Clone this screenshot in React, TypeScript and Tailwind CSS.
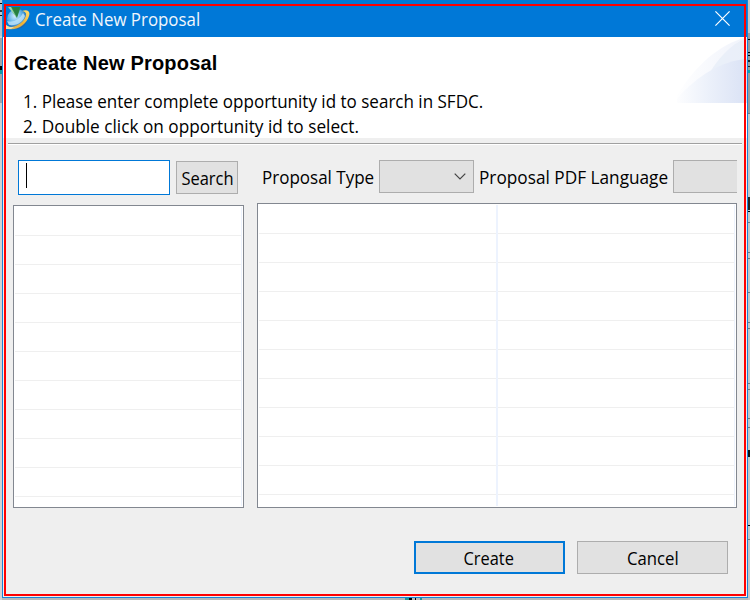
import type { ReactNode } from "react";

const leftRows = Array.from({ length: 10 }, (_, i) => i);

function EdgeStrip({ side }: { side: "left" | "right" }) {
  return side === "left" ? (
    <svg className="h-[600px] w-[2px] shrink-0" viewBox="0 0 2 600" shapeRendering="crispEdges">
      <rect width="2" height="600" fill="#d2d2d2" />
      <rect y="0" width="2" height="36" fill="#bcc3ca" />
      <rect y="3" width="2" height="1" fill="#000" />
      <rect y="10" width="2" height="2" fill="#333" />
      <rect y="15" width="2" height="1" fill="#111" />
      <rect y="38" width="2" height="65" fill="#a3a5a8" />
      <rect y="66" width="2" height="4" fill="#000" />
      <rect y="70" width="2" height="4" fill="#169c9c" />
    </svg>
  ) : (
    <svg className="h-[600px] w-[2px] shrink-0" viewBox="0 0 2 600" shapeRendering="crispEdges">
      <rect width="2" height="600" fill="#c6c6c6" />
      <rect y="33" width="2" height="80" fill="#9b9b9b" />
      <rect y="39" width="2" height="1" fill="#000" />
      <rect y="52" width="2" height="1" fill="#000" />
      <rect y="55" width="2" height="1" fill="#000" />
      <rect y="60" width="2" height="2" fill="#222" />
      <rect y="66" width="2" height="1" fill="#222" />
      <rect y="70" width="2" height="3" fill="#12a5a5" />
      <rect y="113" width="2" height="1" fill="#777" />
      <rect y="197" width="2" height="13" fill="#26221f" />
      <rect y="211" width="2" height="1" fill="#000" />
      {[222, 252, 258, 292, 322, 328, 383, 389, 418, 427, 539].map((y) => (
        <rect key={y} y={y} width="2" height="1" fill="#777" />
      ))}
      <rect y="450" width="2" height="7" fill="#111" />
      <rect y="525" width="2" height="1" fill="#000" />
    </svg>
  );
}

function AppIcon() {
  return (
    <svg className="h-[26px] w-[25px] shrink-0" viewBox="0 0 25 26">
      <defs>
        <radialGradient id="globe" cx="40%" cy="35%" r="65%">
          <stop offset="0" stopColor="#d4efff" />
          <stop offset="0.55" stopColor="#5eb0e5" />
          <stop offset="1" stopColor="#1c64ac" />
        </radialGradient>
        <linearGradient id="ring" x1="0" y1="1" x2="1" y2="0">
          <stop offset="0" stopColor="#d9b45e" />
          <stop offset="0.5" stopColor="#f0b234" />
          <stop offset="1" stopColor="#ffdf70" />
        </linearGradient>
      </defs>
      <circle cx="12" cy="12" r="10" fill="url(#globe)" />
      <path d="M2 14 C9 16 15 12 18 6 L20 9 C18 15 12 19 4 18Z" fill="#bfe5fa" opacity="0.8" />
      <path d="M2 20 C9 21 17 17 20 11 C22 7 21 5 17 4 C23 2 25.500 5 24 9 C22 17 12 24 3 22Z" fill="url(#ring)" />
      <path d="M0 17 C3 20 6 20 9 20 L6 22 L0 22Z" fill="#e9dfad" />
      <path d="M3 -1 L16 -1 L12 11Z" fill="#2f8a4b" />
      <path d="M3 0 L6 0 L12 11Z" fill="#9bd5a6" />
      <path d="M7 0 L15 0 L12 9Z" fill="#267f40" />
    </svg>
  );
}

function Swoosh() {
  return (
    <svg className="h-[66px] w-[70px] shrink-0" viewBox="0 0 70 66">
      <defs>
        <linearGradient id="sweep">
          <stop offset="0" stopColor="#fff" />
          <stop offset="0.5" stopColor="#ebf0fa" />
          <stop offset="1" stopColor="#dae2f5" />
        </linearGradient>
        <linearGradient id="sweepLight">
          <stop offset="0" stopColor="#fff" />
          <stop offset="1" stopColor="#f0f3fb" />
        </linearGradient>
      </defs>
      <path d="M-4 66 C14 32 40 8 70 0 V66Z" fill="url(#sweepLight)" />
      <path d="M30 40 C40 23 53 7 70 1 V66 H30Z" fill="#e7edf8" opacity="0.8" />
      <path d="M-4 66 C18 40 43 24 70 22 V66Z" fill="url(#sweep)" />
    </svg>
  );
}

function Rows({ className }: { className: string }) {
  return (
    <div className={className}>
      {leftRows.map((r) => (
        <div key={r} className="h-[29px] shrink-0 border-b border-[#efefef]" />
      ))}
    </div>
  );
}

function Text({ children, className }: { children: ReactNode; className: string }) {
  return <span className={`block whitespace-nowrap ${className}`}>{children}</span>;
}

export default function App() {
  return (
    <div className="relative flex h-[600px] w-[750px] overflow-hidden bg-[#c9c9c9] font-['Open_Sans','Noto_Sans',sans-serif] text-[18px] leading-[25px] text-black">
      <EdgeStrip side="left" />
      <div className="flex h-[600px] w-[746px] shrink-0 flex-col">
        <div className="flex h-[598px] flex-col border-x border-b border-[#1883d7] bg-[#efefef]">
          <header className="flex h-[37px] shrink-0 items-start bg-[#0078d7] pt-[5px] pl-[2px] text-white">
            <div className="mt-[2px] h-[26px] w-[25px] shrink-0"><AppIcon /></div>
            <Text className="mt-[2px] ml-[5px] h-[25px] w-[680px] origin-left scale-x-[0.937] text-[#f0f6fc]">Create New Proposal</Text>
            <svg className="mt-[6px] h-[15px] w-[15px] shrink-0" viewBox="0 0 15 15" stroke="#fff" strokeWidth="1.2">
              <path d="M.4 .4 14.6 14.6M14.6 .4 .4 14.6" />
            </svg>
          </header>
          <section className="flex h-[101px] shrink-0 justify-between bg-white">
            <div className="pt-[12px] pl-[11px]">
              <h1 className="h-[28px] font-['Liberation_Sans',Arial,sans-serif] text-[20px] leading-[28px] font-bold tracking-[0.18px]">
                <Text className="w-fit">Create New Proposal</Text>
              </h1>
              <ol className="pt-[12px] pl-[9px]">
                <li><Text className="w-fit origin-left scale-x-[0.946]">1. Please enter complete opportunity id to search in SFDC.</Text></li>
                <li><Text className="w-fit origin-left scale-x-[0.956]">2. Double click on opportunity id to select.</Text></li>
              </ol>
            </div>
            <Swoosh />
          </section>
          <div className="mt-[5px] ml-[5px] h-[2px] w-[734px] shrink-0 border-t border-b border-t-[#a0a0a0] border-b-white" />
          <main className="flex h-[363px] shrink-0 pl-[10px]">
            <div className="w-[231px] shrink-0 pt-[15px]">
              <div className="flex pl-[5px]">
                <div className="h-[35px] w-[152px] border border-[#0078d7] bg-white pt-[2px] pl-[7px]">
                  <div className="h-[25px] w-px bg-black" />
                </div>
                <button className="mt-px ml-[6px] flex h-[33px] w-[62px] justify-center border border-[#adadad] bg-[#e1e1e1] pt-[4px]">
                  <Text className="w-fit scale-x-[0.915]">Search</Text>
                </button>
              </div>
              <div className="mt-[10px] flex h-[303px] overflow-hidden border border-[#828790] bg-white pt-px pr-px pl-px">
                <Rows className="flex w-[226px] flex-col" />
                <div className="h-[299px] w-px bg-[#edf3fe]" />
              </div>
            </div>
            <div className="ml-[13px] w-[480px] shrink-0 pt-[15px]">
              <div className="flex h-[33px] overflow-hidden">
                <div className="w-[122px] shrink-0 pt-[5px] pl-[5px]"><Text className="w-fit origin-left scale-x-[0.945]">Proposal Type</Text></div>
                <div className="flex h-[33px] w-[95px] shrink-0 items-center justify-end border border-[#adadad] bg-[#e1e1e1] pr-[7px]">
                  <svg className="h-[7px] w-[12px]" viewBox="0 0 12 7" fill="none" stroke="#444" strokeWidth="1.2"><path d="M.7 .7 6 6 11.3 .7" /></svg>
                </div>
                <div className="w-[199px] shrink-0 pt-[5px] pl-[5px]"><Text className="w-fit origin-left scale-x-[0.957]">Proposal PDF Language</Text></div>
                <div className="h-[33px] w-[64px] shrink-0 border-y border-l border-[#adadad] bg-[#e1e1e1]" />
              </div>
              <div className="mt-[10px] flex h-[305px] overflow-hidden border border-[#828790] bg-white pt-px pl-px">
                <Rows className="flex w-[237px] flex-col" />
                <div className="h-[301px] w-[2px] bg-[#edf3fe]" />
                <Rows className="flex w-[236px] flex-col" />
                <div className="h-[301px] w-px bg-[#edf3fe]" />
              </div>
            </div>
          </main>
          <footer className="flex justify-end gap-[12px] pt-[33px] pr-[19px]">
            <button className="flex h-[33px] w-[151px] justify-center border-2 border-[#0078d7] bg-[#e1e1e1] pt-[3px] pr-px"><Text className="w-fit scale-x-[0.91]">Create</Text></button>
            <button className="flex h-[33px] w-[151px] justify-center border border-[#adadad] bg-[#e1e1e1] pt-[4px]"><Text className="w-fit scale-x-[0.93]">Cancel</Text></button>
          </footer>
        </div>
        <div className="flex h-[2px] bg-[#b8b8b8] pl-[403px]">
          <div className="w-[4px] bg-[#209595]" />
          <div className="w-[3px] bg-black" />
          <div className="ml-[3px] w-px bg-black" />
          <div className="ml-[4px] w-[2px] bg-[#209595]" />
        </div>
      </div>
      <EdgeStrip side="right" />
      <div className="pointer-events-none absolute top-[4px] left-[4px] h-[592px] w-[742px] border-2 border-[#ff0000]" />
    </div>
  );
}
